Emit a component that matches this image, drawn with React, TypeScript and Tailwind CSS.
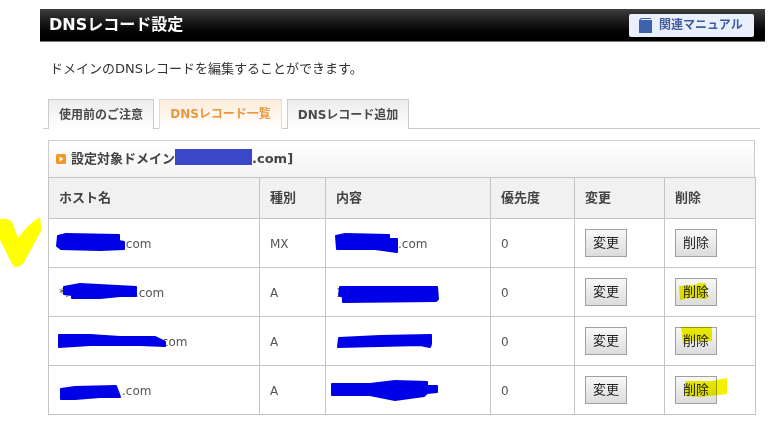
import type { ReactNode } from 'react'

const rows = [
  { host: 'w-[63px]', hostPrefix: '', type: 'MX', value: 'w-[62px]', valuePrefix: '', valueSuffix: '.com' },
  { host: 'w-[66px]', hostPrefix: '*.', type: 'A', value: 'w-0', valuePrefix: '1', valueSuffix: '' },
  { host: 'w-[99px]', hostPrefix: '', type: 'A', value: 'w-0', valuePrefix: '', valueSuffix: '' },
  { host: 'w-[63px]', hostPrefix: '', type: 'A', value: 'w-0', valuePrefix: '', valueSuffix: '' },
]

// blue marker strokes hiding the domains
const blueMarks = [
  '58,236 66,234 119,235 119,241 124,242 124,249 100,250 61,249 57,246',
  '336,236 345,234 389,235 389,239 397,239 397,252 375,249 337,249',
  '64,287 80,284 136,287 136,296 120,296 100,298 72,298 72,295 64,294',
  '340,287 437,287 438,299 436,301 343,302 343,297 339,295',
  '59,335 90,335 120,337 155,337 165,342 165,346 140,345 90,345 59,347',
  '339,338 380,336 431,335 431,344 430,347 420,345 338,347',
  '61,389 75,387 116,386 119,394 120,397 100,397 75,399 61,399',
  '332,384 370,384 395,381 427,382 427,386 437,386 437,392 427,393 424,396 395,400 370,395 332,395',
]

// yellow highlighter
const yellowMarks = [
  '679,286 696,285 698,283 706,283 707,299 690,298 680,300',
  '681,327 712,327 712,341 690,341 683,344',
  '685,381 712,381 727,378 727,394 700,397 686,396',
]

function Th({ children }: { children: ReactNode }) {
  return <th className="border border-[#c4c4c4] bg-[#f1f1f1] pl-[10px] text-left font-bold text-[#444]">{children}</th>
}

function Td({ children }: { children: ReactNode }) {
  return <td className="border border-[#c4c4c4] pl-[10px] pt-[2px] text-[12px] text-[#555]">{children}</td>
}

function ButtonCell({ label }: { label: string }) {
  return (
    <td className="border border-[#c4c4c4] pl-[10px]">
      <button className="block h-[28px] w-[42px] border border-[#a0a0a0] bg-gradient-to-b from-[#f8f8f8] to-[#dcdcdc] text-[13px] text-[#222]">
        {label}
      </button>
    </td>
  )
}

export default function App() {
  return (
    <div className="relative h-[423px] w-[776px] overflow-hidden bg-white pl-[40px] pt-[9px] font-['DejaVu_Sans','Noto_Sans_CJK_JP',sans-serif] text-[13px] text-[#333]">
      {/* title bar */}
      <div className="flex h-[33px] w-[725px] items-center justify-between border-b border-[#777] bg-gradient-to-b from-[#3e3e3e] to-[#000] pl-[9px] pr-[11px]">
        <span className="text-[16px] font-bold text-white">DNSレコード設定</span>
        <a className="flex h-[23px] w-[125px] items-center gap-[7px] rounded-[2px] bg-[#e9effb] pl-[10px] text-[12px] font-bold text-[#3f5c9f]">
          <svg width="13" height="15" viewBox="0 0 13 15">
            <path d="M0 2 L2 0 H12 V1 H2.5 L1.5 2 H13 V15 H0 Z" fill="#3f62ad" />
          </svg>
          関連マニュアル
        </a>
      </div>

      <p className="ml-[10px] mt-[17px] leading-[19px]">ドメインのDNSレコードを編集することができます。</p>

      {/* tabs */}
      <div className="ml-[3px] mt-[21px] flex h-[30px] w-[717px] gap-[5px] border-b border-[#ccc] pl-[5px] text-[12px] font-bold">
        <div className="flex h-[30px] w-[106px] items-center justify-center border border-b-0 border-[#ccc] bg-gradient-to-b from-[#ececec] to-white text-[#4a4a4a]">使用前のご注意</div>
        <div className="flex h-[30px] w-[123px] items-center justify-center border border-[#ddd] border-b-white bg-gradient-to-b from-[#fdecd9] to-white text-[#e8963f]">DNSレコード一覧</div>
        <div className="flex h-[30px] w-[122px] items-center justify-center border border-b-0 border-[#ccc] bg-gradient-to-b from-[#ececec] to-white text-[#4a4a4a]">DNSレコード追加</div>
      </div>

      {/* record list */}
      <div className="ml-[8px] mt-[11px] w-[707px]">
        <div className="flex h-[37px] items-center gap-[5px] border border-b-0 border-[#ccc] bg-gradient-to-b from-white to-[#f3f3f3] pl-[7px] font-bold text-[#444]">
          <svg width="10" height="10" viewBox="0 0 10 10">
            <rect width="10" height="10" rx="1.5" fill="#f09a28" />
            <path d="M3.5 2.5 L7.5 5 L3.5 7.5 Z" fill="#fff" />
          </svg>
          <span>
            設定対象ドメイン<span className="inline-block w-[77px]" />.com]
          </span>
        </div>
        <table className="w-[707px] table-fixed border-collapse">
          <colgroup>
            <col className="w-[211px]" />
            <col className="w-[66px]" />
            <col className="w-[165px]" />
            <col className="w-[84px]" />
            <col className="w-[90px]" />
            <col className="w-[91px]" />
          </colgroup>
          <thead>
            <tr className="h-[41px]">
              <Th>ホスト名</Th>
              <Th>種別</Th>
              <Th>内容</Th>
              <Th>優先度</Th>
              <Th>変更</Th>
              <Th>削除</Th>
            </tr>
          </thead>
          <tbody>
            {rows.map((row, i) => (
              <tr key={i} className="h-[49px]">
                <Td>
                  {row.hostPrefix}
                  <span className={`inline-block ${row.host}`} />
                  .com
                </Td>
                <Td>{row.type}</Td>
                <Td>
                  {row.valuePrefix}
                  <span className={`inline-block ${row.value}`} />
                  {row.valueSuffix}
                </Td>
                <Td>0</Td>
                <ButtonCell label="変更" />
                <ButtonCell label="削除" />
              </tr>
            ))}
          </tbody>
        </table>
      </div>

      {/* hand drawn markup on top of the screenshot */}
      <svg className="pointer-events-none absolute left-0 top-0 mix-blend-multiply" width="776" height="423" viewBox="0 0 776 423">
        <path d="M0 219 Q8 218 12 222 L18 238 Q28 224 40 217 L41.5 230 L24 262 Q20 268 14 267 L10 260 L0 240 Z" fill="#ffff00" />
        {yellowMarks.map((points) => (
          <polygon key={points} points={points} fill="#f2f200" />
        ))}
      </svg>
      <svg className="pointer-events-none absolute left-0 top-0" width="776" height="423" viewBox="0 0 776 423">
        <rect x="175" y="149" width="77" height="16" fill="#3c46c8" />
        {blueMarks.map((points) => (
          <polygon key={points} points={points} fill="#0000e6" stroke="#0000e6" strokeWidth="2" strokeLinejoin="round" />
        ))}
      </svg>
    </div>
  )
}
